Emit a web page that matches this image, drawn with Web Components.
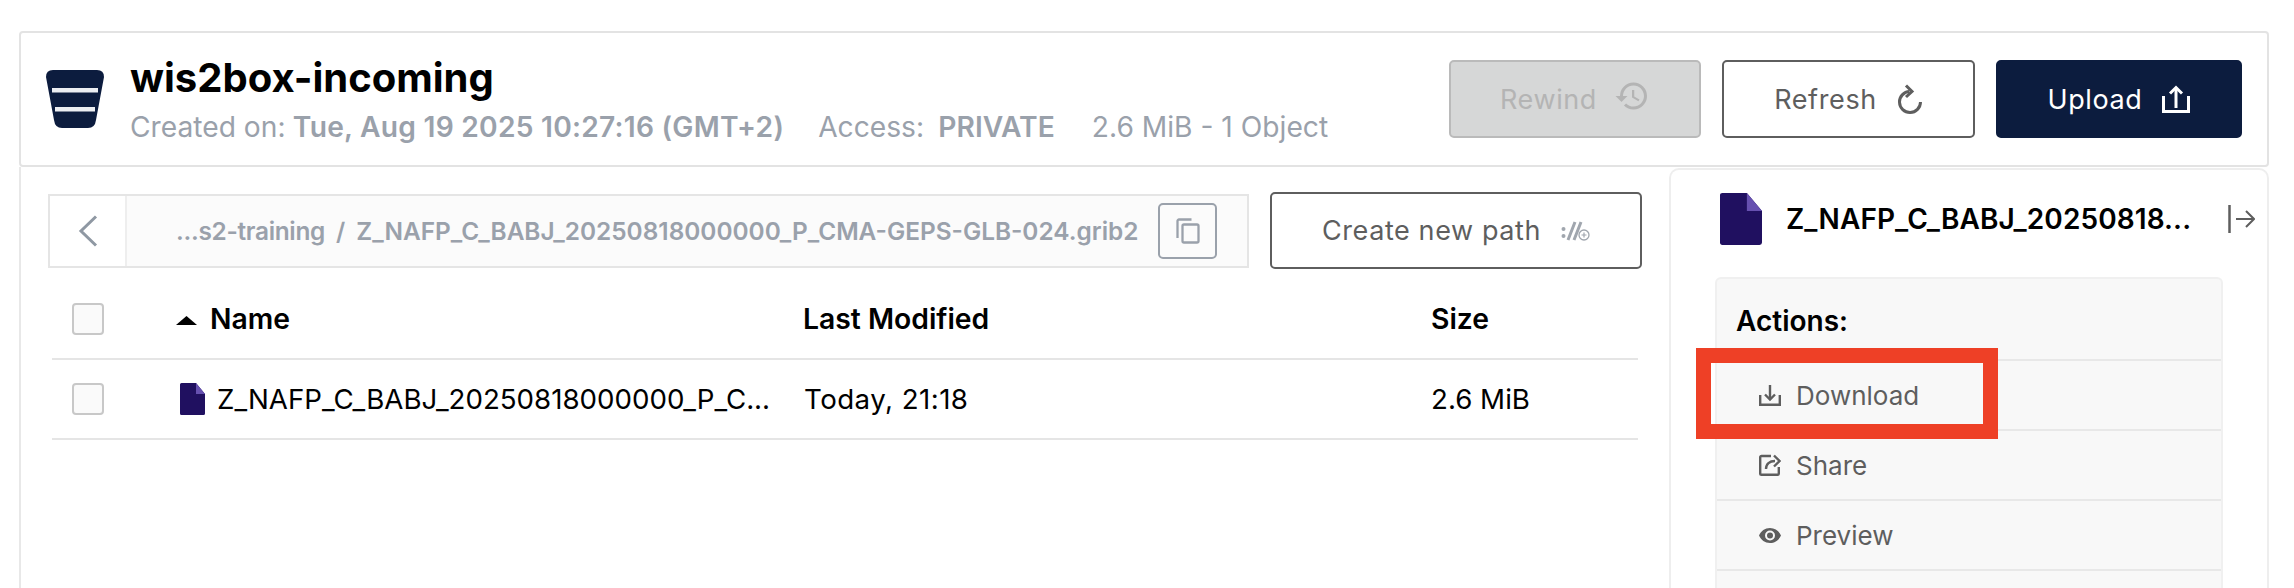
<!DOCTYPE html>
<html lang="en">
<head>
<meta charset="utf-8">
<title>wis2box-incoming</title>
<style>
  html, body { margin: 0; padding: 0; background: #fff; }
  body { width: 2294px; height: 588px; overflow: hidden; font-family: Inter, "Liberation Sans", sans-serif; color: #000; position: relative; }
  .page { display: flex; flex-direction: column; height: 588px; padding: 31px 25px 0 19px; box-sizing: border-box; }
  svg { display: block; flex: none; }
</style>
</head>
<body>
<div class="page">
  <bucket-header>
    <span slot="name">wis2box-incoming</span>
    <meta-item label="Created on:" value="Tue, Aug 19 2025 10:27:16 (GMT+2)" style="--ls:.24px;margin-right:-3px"></meta-item>
    <meta-item label="Access:" value="PRIVATE" spaced></meta-item>
    <meta-item label="2.6 MiB - 1 Object"></meta-item>
    <ui-button slot="actions" kind="disabled" style="width:252px;gap:17px">Rewind
      <svg slot="icon" width="36" height="36" viewBox="0 0 24 24" fill="#b4b4b4" style="transform:translateY(-3px)"><path d="M13 3a9 9 0 0 0-9 9H1l3.890 3.890.07.14L9 12H6c0-3.870 3.130-7 7-7s7 3.130 7 7-3.130 7-7 7c-1.930 0-3.680-.79-4.940-2.060l-1.420 1.420A8.954 8.954 0 0 0 13 21a9 9 0 0 0 0-18zm-1 5v5l4.280 2.540.72-1.210-3.500-2.080V8H12z"/></svg>
    </ui-button>
    <ui-button slot="actions" style="width:253px">Refresh
      <svg slot="icon" width="26" height="30" viewBox="0 0 26 30" fill="none" stroke="#5e5e5e" stroke-width="3"><path d="M23.500 18A10.500 10.500 0 1 1 12.500 7.500"/><path d="M9 1.500 15 7.500 9 13" fill="none"/></svg>
    </ui-button>
    <ui-button slot="actions" kind="primary" style="width:246px">Upload
      <svg slot="icon" width="28" height="28" viewBox="0 0 28 28" fill="none" stroke="#fff" stroke-width="3"><path d="M1.500 11V26.500H26.500V11"/><path d="M14 23V3"/><path d="M8 8.500 14 2.500 20 8.500"/></svg>
    </ui-button>
  </bucket-header>
  <div style="display:flex;flex:1;min-height:0">
    <browser-pane>
      <path-bar>
        <span style="letter-spacing:-.3px">...s2-training</span><span class="sep">/</span><span>Z_NAFP_C_BABJ_20250818000000_P_CMA-GEPS-GLB-024.grib2</span>
      </path-bar>
      <ui-button style="width:372px;height:77px">Create new path
        <svg slot="icon" width="29" height="20" viewBox="0 0 29 20" fill="none"><circle cx="2.500" cy="8" r="2" fill="#a0a6ae"/><circle cx="2.500" cy="15" r="2" fill="#a0a6ae"/><path d="M7 19 14 1M13 19 20 1" stroke="#a0a6ae" stroke-width="3"/><circle cx="23" cy="14" r="5" stroke="#a0a6ae" stroke-width="1.300" fill="#fff"/><path d="M20.500 14h5M23 11.500v5" stroke="#a0a6ae" stroke-width="1.200"/></svg>
      </ui-button>
      <object-row slot="table" head>
        <span slot="name" style="display:flex;align-items:center"><svg width="21" height="9" viewBox="0 0 21 9" style="margin-right:13px;margin-top:2px"><path d="M0 9 10.500 0 21 9z" fill="#000"/></svg>Name</span>
        <span slot="modified">Last Modified</span>
        <span slot="size">Size</span>
      </object-row>
      <object-row slot="table">
        <span slot="name" style="display:flex;align-items:center;padding-left:4px"><file-icon style="width:25px;height:32px;margin-right:12px"></file-icon>Z_NAFP_C_BABJ_20250818000000_P_C...</span>
        <span slot="modified" style="letter-spacing:.45px;padding-left:1px">Today, 21:18</span>
        <span slot="size">2.6 MiB</span>
      </object-row>
    </browser-pane>
    <detail-pane>
      <span slot="title">Z_NAFP_C_BABJ_20250818...</span>
      <action-row label="Download">
        <svg slot="icon" width="22" height="22" viewBox="0 0 22 22" fill="none" stroke="#5e5e5e" stroke-width="2.400"><path d="M1.200 11V20.800H20.800V11"/><path d="M11 1V15"/><path d="M6 10.500 11 15.500 16 10.500"/></svg>
      </action-row>
      <action-row label="Share">
        <svg slot="icon" width="22" height="22" viewBox="0 0 22 22" fill="none" stroke="#5e5e5e" stroke-width="2.400"><path d="M12 2H2.500A1.300 1.300 0 0 0 1.200 3.300V19.500A1.300 1.300 0 0 0 2.500 20.800H18.500A1.300 1.300 0 0 0 19.800 19.500V13"/><path d="M7 15C7 10 10.500 7 16 7"/><path d="M15 1.500 20.500 7 15 12.500"/></svg>
      </action-row>
      <action-row label="Preview">
        <svg slot="icon" width="22" height="15" viewBox="0 0 22 15"><path d="M11 0C6 0 1.900 3.100 0 7.500 1.900 11.900 6 15 11 15s9.100-3.100 11-7.500C20.100 3.100 16 0 11 0zm0 12.500a5 5 0 1 1 0-10 5 5 0 0 1 0 10zm0-8a3 3 0 1 0 0 6 3 3 0 0 0 0-6z" fill="#5e5e5e"/></svg>
      </action-row>
      <action-row label=""></action-row>
    </detail-pane>
  </div>
</div>
<callout-box></callout-box>

<script>
class FileIcon extends HTMLElement {
  constructor() {
    super();
    this.attachShadow({ mode: "open" }).innerHTML = `
      <style>:host { display: inline-block; flex: none; } svg { display: block; width: 100%; height: 100%; }</style>
      <svg viewBox="0 0 25 32" preserveAspectRatio="none">
        <path d="M1.500 0H16L25 11V30.500A1.500 1.500 0 0 1 23.500 32H1.500A1.500 1.500 0 0 1 0 30.500V1.500A1.500 1.500 0 0 1 1.500 0Z" fill="#201060"/>
        <path d="M16 0 25 11H16Z" fill="#6650b0"/>
      </svg>`;
  }
}

class MetaItem extends HTMLElement {
  connectedCallback() {
    const root = this.attachShadow({ mode: "open" });
    const label = this.getAttribute("label");
    const value = this.getAttribute("value");
    root.innerHTML = `
      <style>
        :host { display: inline-flex; white-space: pre; }
        b { font-weight: 600; letter-spacing: var(--ls, 0); }
      </style>
      <span>${label}</span>${value ? `<b>${this.hasAttribute("spaced") ? "  " : " "}${value}</b>` : ""}`;
  }
}

class BucketHeader extends HTMLElement {
  constructor() {
    super();
    this.attachShadow({ mode: "open" }).innerHTML = `
      <style>
        :host { display: flex; align-items: center; height: 136px; box-sizing: border-box; border: 2px solid #e3e3e3; border-radius: 4px; padding: 0 25px 0 25px; flex: none; }
        .logo { margin-right: 26px; }
        .text { flex: 1; min-width: 0; margin-top: 2px; }
        .name { font-size: 40px; font-weight: 700; line-height: 48px; margin-top: -3px; }
        .meta { display: flex; gap: 37px; font-size: 28.200px; line-height: 34px; color: #9aa1ab; margin-top: 8px; }
        .actions { display: flex; gap: 21px; }
      </style>
      <svg class="logo" style="display:block;flex:none" width="58" height="58" viewBox="0 0 58 58">
        <path d="M7 0H51Q58 0 58 7L50 50Q49 58 42 58H16Q9 58 8 50L0 7Q0 0 7 0Z" fill="#0c1c3e"/>
        <rect x="6" y="18" width="46" height="4.500" fill="#eceef2"/>
        <rect x="9" y="37" width="40" height="4.500" fill="#eceef2"/>
      </svg>
      <div class="text">
        <div class="name"><slot name="name"></slot></div>
        <div class="meta"><slot></slot></div>
      </div>
      <div class="actions"><slot name="actions"></slot></div>`;
  }
}

class UiButton extends HTMLElement {
  constructor() {
    super();
    this.attachShadow({ mode: "open" }).innerHTML = `
      <style>
        :host { display: inline-flex; align-items: center; justify-content: center; gap: 20px; box-sizing: border-box; height: 78px; flex: none; border: 2px solid #5e5e5e; border-radius: 5px; background: #fff; color: #5e5e5e; font-size: 27px; letter-spacing: .6px; white-space: nowrap; }
        :host([kind="disabled"]) { background: #d6d7d7; border-color: #bababa; color: #b4b4b4; }
        :host([kind="primary"]) { background: #0c1c3e; border-color: #0c1c3e; color: #fff; }
      </style>
      <slot></slot><slot name="icon"></slot>`;
  }
}

class PathBar extends HTMLElement {
  constructor() {
    super();
    this.attachShadow({ mode: "open" }).innerHTML = `
      <style>
        :host { display: flex; height: 74px; width: 1201px; box-sizing: border-box; border: 2px solid #e5e5e5; flex: none; }
        .back { width: 75px; display: flex; align-items: center; justify-content: center; border-right: 2px solid #eeeeee; flex: none; }
        .path { flex: 1; display: flex; align-items: center; background: #fbfbfb; padding-left: 49px; font-size: 24.400px; font-weight: 600; color: #9aa1ab; white-space: nowrap; min-width: 0; }
        ::slotted(.sep) { margin: 0 11px; }
        .copy { width: 59px; height: 56px; box-sizing: border-box; border: 2px solid #9aa1ab; border-radius: 5px; margin: 0 30px 0 auto; display: flex; align-items: center; justify-content: center; flex: none; }
      </style>
      <div class="back"><svg width="20" height="32" viewBox="0 0 20 32" fill="none" stroke="#8f98a3" stroke-width="3"><path d="M18 1.500 3 16 18 30.500"/></svg></div>
      <div class="path">
        <slot></slot>
        <div class="copy"><svg width="24" height="26" viewBox="0 0 24 26" fill="none" stroke="#9aa1ab" stroke-width="2.300"><path d="M15.500 1.500H3A1.500 1.500 0 0 0 1.500 3V20"/><rect x="6.500" y="6.500" width="16" height="18" rx="1.500"/></svg></div>
      </div>`;
  }
}

class ObjectRow extends HTMLElement {
  constructor() {
    super();
    this.attachShadow({ mode: "open" }).innerHTML = `
      <style>
        :host { display: grid; grid-template-columns: 124px 627px 628px 1fr; align-items: center; height: 80px; box-sizing: border-box; border-bottom: 2px solid #e5e5e5; font-size: 27.700px; white-space: nowrap; }
        :host([head]) { font-weight: 600; font-size: 28.300px; }
        .check { width: 32px; height: 32px; box-sizing: border-box; border: 2px solid #c8c8c8; border-radius: 4px; background: #fafafa; margin-left: 20px; }
      </style>
      <div class="check"></div>
      <slot name="name"></slot>
      <slot name="modified"></slot>
      <slot name="size"></slot>`;
  }
}

class BrowserPane extends HTMLElement {
  constructor() {
    super();
    this.attachShadow({ mode: "open" }).innerHTML = `
      <style>
        :host { display: block; width: 1650px; box-sizing: border-box; border-left: 2px solid #e8e8e8; padding: 25px 27px 0 27px; flex: none; }
        .bar { display: flex; align-items: center; gap: 21px; }
        .table { margin: 11px 4px 0 4px; }
      </style>
      <div class="bar"><slot></slot></div>
      <div class="table"><slot name="table"></slot></div>`;
  }
}

class DetailPane extends HTMLElement {
  constructor() {
    super();
    this.attachShadow({ mode: "open" }).innerHTML = `
      <style>
        :host { display: block; flex: 1; box-sizing: border-box; border: 2px solid #eeeeee; border-bottom: 0; border-radius: 10px 10px 0 0; padding: 22px 44px 0 44px; margin-top: 1px; }
        .top { display: flex; align-items: center; height: 54px; margin-right: -32px; padding-left: 5px; }
        .title { flex: 1; font-size: 28px; font-weight: 600; margin-left: 24px; white-space: nowrap; letter-spacing: .1px; }
        .actions { margin-top: 31px; border: 2px solid #f0f0f0; border-bottom: 0; border-radius: 6px 6px 0 0; background: #f8f8f8; height: 312px; overflow: hidden; }
        .head { height: 82px; box-sizing: border-box; border-bottom: 2px solid #e8e8e8; padding: 26px 0 0 19px; font-size: 28px; font-weight: 600; line-height: 32px; }
      </style>
      <div class="top">
        <file-icon style="width:42px;height:52px"></file-icon>
        <div class="title"><slot name="title"></slot></div>
        <svg style="display:block" width="27" height="28" viewBox="0 0 27 28" fill="none" stroke="#5e5e5e" stroke-width="2"><path d="M1.500 0V28" stroke-width="2.500"/><path d="M8 14H26"/><path d="M18 6 26 14 18 22"/></svg>
      </div>
      <div class="actions">
        <div class="head">Actions:</div>
        <slot></slot>
      </div>`;
  }
}

class ActionRow extends HTMLElement {
  connectedCallback() {
    const root = this.attachShadow({ mode: "open" });
    root.innerHTML = `
      <style>
        :host { display: flex; align-items: center; height: 70px; box-sizing: border-box; border-bottom: 2px solid #e8e8e8; padding-left: 42px; color: #5e5e5e; font-size: 26px; }
        .ico { width: 22px; margin-right: 15px; display: flex; justify-content: center; }
      </style>
      <div class="ico"><slot name="icon"></slot></div>
      <span>${this.getAttribute("label")}</span>`;
  }
}

class CalloutBox extends HTMLElement {
  constructor() {
    super();
    this.attachShadow({ mode: "open" }).innerHTML = `
      <style>
        :host { position: absolute; left: 1696px; top: 348px; width: 302px; height: 91px; box-sizing: border-box; border: 15px solid #ee4026; pointer-events: none; }
      </style>`;
  }
}

customElements.define("file-icon", FileIcon);
customElements.define("meta-item", MetaItem);
customElements.define("bucket-header", BucketHeader);
customElements.define("ui-button", UiButton);
customElements.define("path-bar", PathBar);
customElements.define("object-row", ObjectRow);
customElements.define("browser-pane", BrowserPane);
customElements.define("detail-pane", DetailPane);
customElements.define("action-row", ActionRow);
customElements.define("callout-box", CalloutBox);
</script>
</body>
</html>
